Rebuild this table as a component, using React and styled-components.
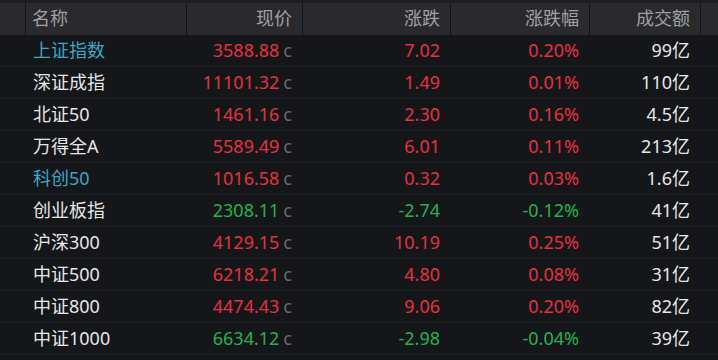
import React from "react";
import styled, { createGlobalStyle } from "styled-components";

const GlobalStyle = createGlobalStyle`
    html, body {
        margin: 0;
        padding: 0;
        background: #15161a;
    }
    body {
        font-family: "Noto Sans", "Noto Sans CJK SC", sans-serif;
    }
`;

const COLS = "25px 161px 116px 148px 139px 111px 18px";

const Table = styled.div`
    width: 718px;
    height: 360px;
    background: #15161a;
    border-top: 3px solid #1e1e22;
    box-sizing: border-box;
    overflow: hidden;
`;

const HeaderRow = styled.div`
    display: grid;
    grid-template-columns: ${COLS};
    height: 32px;
    background: #2a2a2e;
`;

const HeaderCell = styled.div`
    display: flex;
    align-items: center;
    justify-content: ${(p) => (p.$left ? "flex-start" : "flex-end")};
    padding: ${(p) => (p.$left ? "0 0 0 6px" : "0 10px 0 0")};
    border-left: ${(p) => (p.$first ? "none" : "1px solid #121215")};
    color: #a0a0a0;
    font-size: 18px;
    line-height: 1;
    padding-bottom: 2px;
`;

const Row = styled.div`
    display: grid;
    grid-template-columns: ${COLS};
    height: 32px;
    border-bottom: 1px solid #202126;
    box-sizing: border-box;
`;

const Cell = styled.div`
    display: flex;
    align-items: center;
    justify-content: ${(p) => (p.$left ? "flex-start" : "flex-end")};
    padding: ${(p) => (p.$left ? "0 0 0 8px" : "0 10px 0 0")};
    font-size: 18px;
    line-height: 1;
    padding-bottom: 2px;
    color: ${(p) => p.$color || "#e6e6e6"};
`;

const Unit = styled.span`
    color: #6a6a6a;
    font-size: 18px;
    margin-left: 4px;
    padding-top: 1px;
`;

const RED = "#e5323e";
const GREEN = "#25b24e";
const BLUE = "#3da6c6";

const rows = [
    ["上证指数", "3588.88", "7.02", "0.20%", "99亿", true],
    ["深证成指", "11101.32", "1.49", "0.01%", "110亿"],
    ["北证50", "1461.16", "2.30", "0.16%", "4.5亿"],
    ["万得全A", "5589.49", "6.01", "0.11%", "213亿"],
    ["科创50", "1016.58", "0.32", "0.03%", "1.6亿", true],
    ["创业板指", "2308.11", "-2.74", "-0.12%", "41亿"],
    ["沪深300", "4129.15", "10.19", "0.25%", "51亿"],
    ["中证500", "6218.21", "4.80", "0.08%", "31亿"],
    ["中证800", "4474.43", "9.06", "0.20%", "82亿"],
    ["中证1000", "6634.12", "-2.98", "-0.04%", "39亿"],
];

export default function App() {
    return (
        <>
            <GlobalStyle />
            <Table>
                <HeaderRow>
                    <HeaderCell $first />
                    <HeaderCell $left>名称</HeaderCell>
                    <HeaderCell>现价</HeaderCell>
                    <HeaderCell>涨跌</HeaderCell>
                    <HeaderCell>涨跌幅</HeaderCell>
                    <HeaderCell>成交额</HeaderCell>
                    <HeaderCell />
                </HeaderRow>
                {rows.map(([name, price, chg, pct, vol, link]) => {
                    const color = chg.startsWith("-") ? GREEN : RED;
                    return (
                        <Row key={name}>
                            <Cell />
                            <Cell $left $color={link ? BLUE : undefined}>
                                {name}
                            </Cell>
                            <Cell $color={color}>
                                {price}
                                <Unit>c</Unit>
                            </Cell>
                            <Cell $color={color}>{chg}</Cell>
                            <Cell $color={color}>{pct}</Cell>
                            <Cell>{vol}</Cell>
                            <Cell />
                        </Row>
                    );
                })}
            </Table>
        </>
    );
}
